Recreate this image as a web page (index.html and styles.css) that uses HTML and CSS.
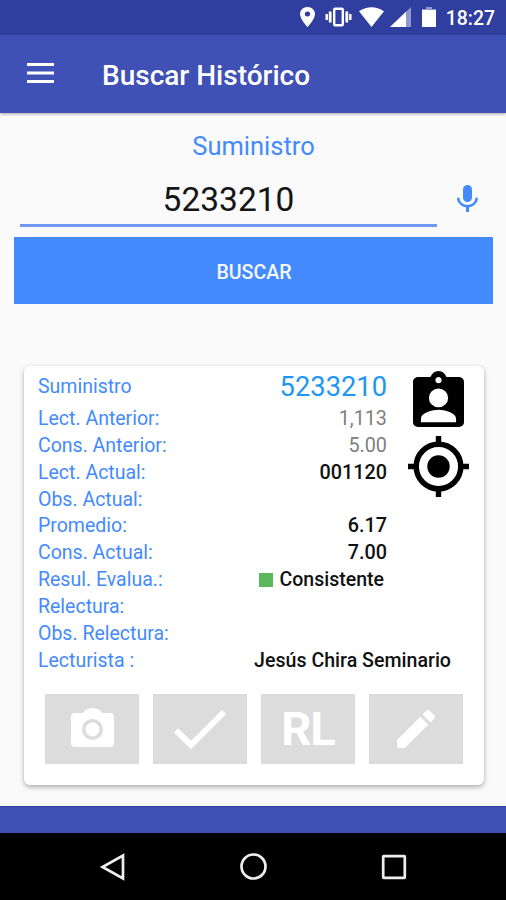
FILE: index.html
```
<!DOCTYPE html>
<html lang="es">
<head>
<meta charset="utf-8">
<title>Buscar Histórico</title>
<link rel="stylesheet" href="styles.css">
</head>
<body>
<div class="screen">
  <div class="status">
    <svg class="s-pin" width="15" height="20" viewBox="5 2 14 20" preserveAspectRatio="none"><path fill="#fff" d="M12 2C8.1 2 5 5.1 5 9c0 5.2 7 13 7 13s7-7.800 7-13c0-3.900-3.100-7-7-7zm0 9.500a2.500 2.500 0 1 1 0-5 2.500 2.500 0 0 1 0 5z"/></svg>
    <svg class="s-vib" width="27" height="20" viewBox="0 0 27 20"><rect x="9.200" y="1.700" width="8.600" height="16.600" rx="1" fill="none" stroke="#fff" stroke-width="2.400"/><path d="M5.200 4.500v11M21.800 4.500v11" stroke="#fff" stroke-width="2.800"/><path d="M1.700 7v6M25.300 7v6" stroke="#fff" stroke-width="2.400"/></svg>
    <svg class="s-wifi" width="25" height="20" viewBox="0 0 25 20"><path fill="#fff" d="M0 4.200Q12.500-3.600 25 4.200L12.500 20z"/></svg>
    <svg class="s-cell" width="21" height="20" viewBox="0 0 21 20"><path fill="#8f99d0" d="M0 20 21 0v20z"/><path fill="#fff" d="M0 20 16 4.760V20z"/></svg>
    <svg class="s-bat" width="14" height="20" viewBox="0 0 14 20"><path fill="#8f99d0" d="M4 0h6v2h4v2H0V2h4z"/><path fill="#fff" d="M0 3h14v17H0z"/></svg>
    <span class="clock">18:27</span>
  </div>
  <header class="appbar">
    <svg width="27" height="20" viewBox="0 0 27 20"><path d="M0 1.500h27M0 10h27M0 18.500h27" stroke="#fff" stroke-width="3"/></svg>
    <h1>Buscar Histórico</h1>
  </header>
  <main class="content">
    <div class="search-label">Suministro</div>
    <div class="search-row">
      <div class="field">5233210</div>
      <svg width="21" height="27" viewBox="5 2 14 19" preserveAspectRatio="none"><path fill="#448aff" d="M12 14c1.660 0 2.990-1.340 2.990-3L15 5c0-1.660-1.340-3-3-3S9 3.340 9 5v6c0 1.660 1.340 3 3 3zm5.300-3c0 3-2.540 5.100-5.300 5.100S6.700 14 6.700 11H5c0 3.410 2.720 6.230 6 6.720V21h2v-3.280c3.280-.48 6-3.300 6-6.720h-1.700z"/></svg>
    </div>
    <button class="search-btn">BUSCAR</button>
    <section class="card">
      <div class="info">
        <dl class="rows">
          <div class="row first"><dt>Suministro</dt><dd class="big">5233210</dd></div>
          <div class="row"><dt>Lect. Anterior:</dt><dd class="muted">1,113</dd></div>
          <div class="row"><dt>Cons. Anterior:</dt><dd class="muted">5.00</dd></div>
          <div class="row"><dt>Lect. Actual:</dt><dd>001120</dd></div>
          <div class="row"><dt>Obs. Actual:</dt><dd></dd></div>
          <div class="row"><dt>Promedio:</dt><dd>6.17</dd></div>
          <div class="row"><dt>Cons. Actual:</dt><dd>7.00</dd></div>
          <div class="row"><dt>Resul. Evalua.:</dt><dd class="result"><i class="mark"></i>Consistente</dd></div>
          <div class="row"><dt>Relectura:</dt><dd></dd></div>
          <div class="row"><dt>Obs. Relectura:</dt><dd></dd></div>
          <div class="row reader"><dt>Lecturista :</dt><dd>Jesús Chira Seminario</dd></div>
        </dl>
        <div class="side">
          <svg width="51" height="56" viewBox="3 .8 18 20.200" preserveAspectRatio="none"><path fill="#000" d="M19 3h-4.180C14.400 1.840 13.300.8 12 .8S9.600 1.840 9.180 3H5c-1.100 0-2 .7-2 1.700v14.600c0 1 .9 1.700 2 1.700h14c1.100 0 2-.7 2-1.700V4.700c0-1-.9-1.700-2-1.700zm-7 0c.6 0 1.100.5 1.100 1.100s-.5 1.100-1.100 1.100-1.100-.5-1.100-1.100.5-1.100 1.100-1.100zm0 4.100a3.200 3.200 0 1 1 0 6.800 3.200 3.200 0 0 1 0-6.800zM18.200 19.300H5.800v-1.300c0-2.100 4.130-3.200 6.200-3.200s6.200 1.100 6.200 3.200z"/></svg>
          <svg width="61" height="61" viewBox="0 0 61 61"><circle cx="30.500" cy="30.500" r="22.300" fill="none" stroke="#000" stroke-width="5.500"/><circle cx="30.500" cy="30.500" r="11.200"/><path d="M30.500 0v8M30.500 53v8M0 30.500h8M53 30.500h8" stroke="#000" stroke-width="5.400"/></svg>
        </div>
      </div>
      <div class="actions">
        <button class="photo"><svg width="43" height="39" viewBox="0 0 43 39"><path fill="#fff" d="M15 1.500Q21.500-1.500 28 1.500L31.500 5H39q4 0 4 4v26q0 4-4 4H4q-4 0-4-4V9q0-4 4-4h7.500z"/><circle cx="21.500" cy="21.500" r="8.700" fill="none" stroke="#dcdcdc" stroke-width="3.600"/></svg></button>
        <button><svg width="52" height="40" viewBox="0 0 52 40"><path d="M2 21.500 17 36 50 3" fill="none" stroke="#fff" stroke-width="6"/></svg></button>
        <button class="rl">RL</button>
        <button><svg width="38" height="38" viewBox="3 3 18 18"><path fill="#fff" d="M3 17.250V20.500l.5.500h3.250L17.810 9.940l-3.750-3.750L3 17.250zM20.710 7.040a1 1 0 0 0 0-1.410l-2.340-2.340a1 1 0 0 0-1.410 0l-1.830 1.830 3.750 3.750 1.830-1.830z"/></svg></button>
      </div>
    </section>
  </main>
  <div class="strip"></div>
  <nav class="nav">
    <svg width="28" height="28" viewBox="0 0 28 28"><path d="M24 2.500v23L3.500 14z"/></svg>
    <svg width="28" height="28" viewBox="0 0 28 28"><circle cx="13.500" cy="13.500" r="12"/></svg>
    <svg width="28" height="28" viewBox="0 0 28 28"><rect x="3.200" y="3.200" width="21.600" height="21.600" rx=".5"/></svg>
  </nav>
</div>
</body>
</html>
```
FILE: styles.css
```
* { box-sizing: border-box; }
body { margin: 0; font-family: Roboto, "Liberation Sans", sans-serif; }
svg { display: block; flex: none; }
button { border: 0; padding: 0; font-family: inherit; }

.screen { width: 506px; height: 900px; display: flex; flex-direction: column; overflow: hidden; background: #fafafa; }

.status { height: 35px; flex: none; display: flex; align-items: center; justify-content: flex-end; padding-right: 11px; background: #303f9f; color: #fff; }
.status svg { margin-top: -1px; }
.s-vib { margin-left: 10px; }
.s-wifi { margin-left: 7px; }
.s-cell { margin-left: 6px; }
.s-bat { margin-left: 11px; }
.clock { margin-left: 10px; padding-top: 2px; font-size: 19.400px; font-weight: 500; line-height: 35px; }

.appbar { height: 78px; flex: none; display: flex; align-items: center; gap: 48px; padding: 0 27px; background: #3f51b5; color: #fff; box-shadow: 0 1px 3px rgba(0, 0, 0, .35); }
.appbar svg { margin-top: -2px; }
.appbar h1 { margin: 0; padding-top: 3px; font-size: 28px; font-weight: 500; line-height: 32px; }

.content { flex: none; height: 693px; padding: 15px 13px 0 14px; }
.search-label { text-align: center; font-size: 25.500px; line-height: 36px; color: #448aff; }
.search-row { display: flex; align-items: center; gap: 21px; height: 63px; padding: 0 14px 0 6px; }
.field { width: 417px; height: 63px; border-bottom: 3px solid #6f98f2; text-align: center; font-size: 33.500px; line-height: 71px; color: #151515; }
.search-row svg { margin: 5px 0 0 -1px; }
.search-btn { display: block; width: 479px; height: 67px; margin-top: 10px; padding: 3px 0 0 1px; background: #448aff; color: #f4f8ff; font-size: 19.600px; font-weight: 500; }

.card { width: 460px; height: 419px; margin: 62px 0 0 10px; padding: 5px 15px 0 14px; background: #fff; border-radius: 6px; box-shadow: 0 2px 5px rgba(0, 0, 0, .32); }
.info { display: flex; }
.rows { margin: 0; width: 349px; flex: none; font-size: 19.500px; }
.row { display: flex; justify-content: space-between; height: 26.850px; line-height: 26.850px; white-space: nowrap; }
.row.first { height: 35px; line-height: 31px; }
dt { color: #448aff; }
dd { margin: 0; color: #111; font-size: 19.800px; font-weight: 500; }
dd.big { padding-top: 1px; font-size: 27.300px; font-weight: 400; color: #2196f3; }
dd.muted { font-weight: 400; color: #808080; }
dd.result { display: flex; align-items: center; padding-right: 3px; font-size: 19.500px; }
.mark { width: 14px; height: 14px; margin-right: 7px; background: #5cb85c; }
.reader dd { margin-right: -64px; font-size: 19.600px; }
.side { flex: none; width: 61px; margin: 0 0 0 21px; display: flex; flex-direction: column; align-items: center; gap: 9px; }

.actions { display: grid; grid-template-columns: repeat(4, 94px); gap: 14px; margin: 20px 0 0 7px; }
.actions button { height: 70px; display: flex; align-items: center; justify-content: center; background: #dcdcdc; color: #fff; }
.actions .photo svg { margin-top: -4px; }
.actions .rl { padding-bottom: 1px; font-size: 47px; font-weight: 700; letter-spacing: -1px; }

.strip { height: 27px; flex: none; background: #3f51b5; border-top: 1px solid #303f9f; }
.nav { height: 67px; flex: none; display: flex; align-items: center; justify-content: space-between; padding: 0 98px 0 99px; background: #000; }
.nav path, .nav circle, .nav rect { fill: none; stroke: #eee; stroke-width: 2.700; }
```
